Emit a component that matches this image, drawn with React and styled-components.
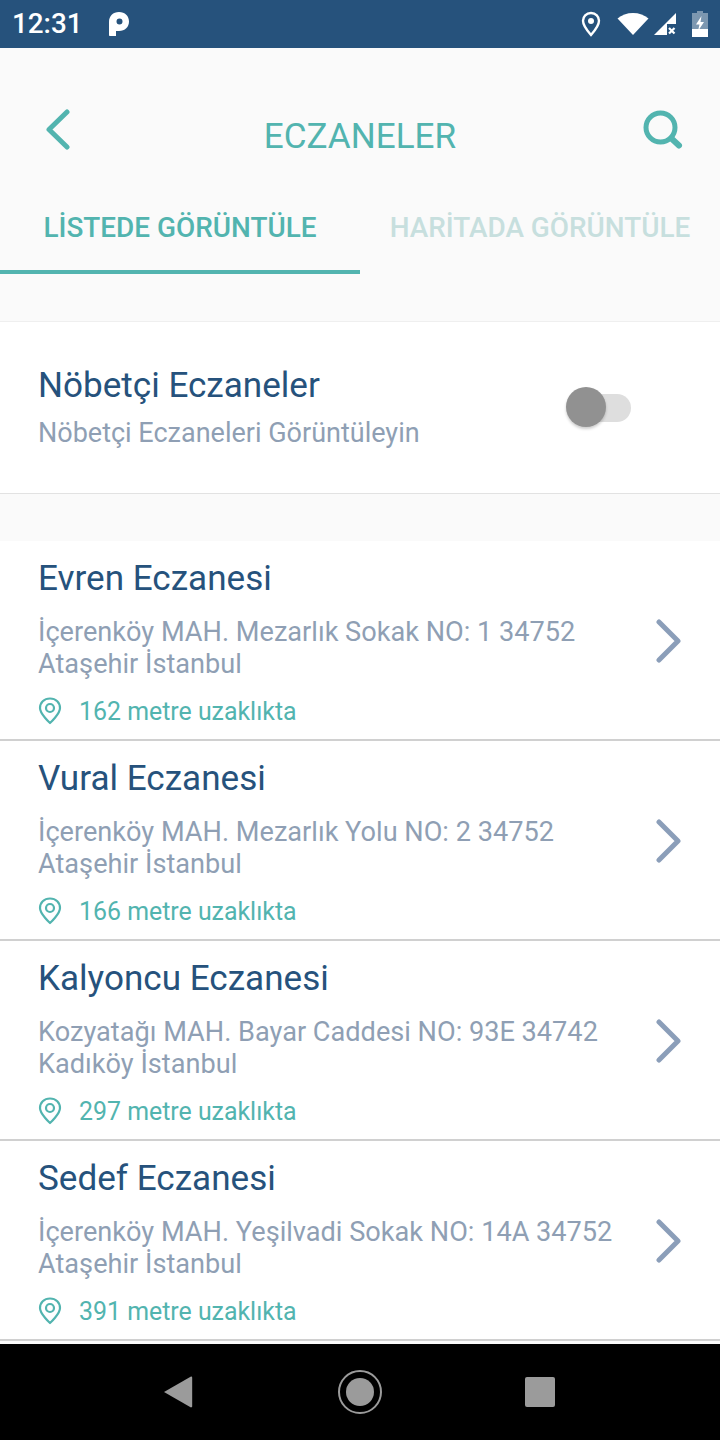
import React from "react";
import styled, { createGlobalStyle } from "styled-components";

const Global = createGlobalStyle`
  html, body { margin: 0; padding: 0; background: #fff; }
  * { box-sizing: border-box; }
  body { font-family: Roboto, "Noto Sans", sans-serif; }
`;
const Screen = styled.div`
  width: 720px; height: 1440px; display: flex; flex-direction: column; overflow: hidden; background: #fafafa;
`;
const StatusBar = styled.div`
  height: 48px; flex: none; background: #26527c; color: #fff; display: flex; align-items: center; padding: 0 12px 0 12px;
`;
const Clock = styled.span`
  font-size: 27.8px; font-weight: 500; width: 97px; line-height: 48px;
`;
const StatusIcons = styled.div`
  margin-left: auto; display: flex; align-items: center; height: 48px;
`;
const Header = styled.header`
  height: 132px; flex: none; display: flex; align-items: flex-start; justify-content: space-between; padding: 61px 36px 0;
`;
const BackSlot = styled.span`
  width: 42px; display: flex; padding-left: 8px;
`;
const Title = styled.h1`
  flex: 1; margin: 3px 0 0; text-align: center; font-size: 35.1px; line-height: 48px; font-weight: 400; color: #52b4af;
`;
const Tabs = styled.div`
  height: 94px; flex: none; display: flex;
`;
const Tab = styled.div`
  width: 360px; display: flex; align-items: center; justify-content: center; padding-top: 5px;
  font-size: 27.9px; font-weight: 500; color: ${p => p.$active ? "#52b4af" : "#c7dfde"};
  border-bottom: 4px solid ${p => p.$active ? "#52b4af" : "transparent"};
`;
const Gap = styled.div`
  height: ${p => p.$h}px; flex: none; background: #fafafa;
`;
const DutyCard = styled.section`
  height: 173px; flex: none; background: #fff; border-top: 1px solid #efefef; border-bottom: 1px solid #e2e2e2;
  display: flex; align-items: center; justify-content: space-between; padding: 0 89px 0 38px;
`;
const Name = styled.div`
  font-size: 35.1px; line-height: 44px; color: #26527c;
`;
const DutySub = styled.div`
  font-size: 27px; line-height: 32px; color: #8f9fb4; margin-top: 10px; margin-bottom: 3px;
`;
const Toggle = styled.div`
  width: 66px; height: 42px; position: relative; display: flex; align-items: center; justify-content: flex-end;
`;
const Track = styled.div`
  width: 60px; height: 28px; border-radius: 14px; background: #dedede;
`;
const Knob = styled.div`
  position: absolute; left: 1px; top: 0; width: 40px; height: 40px; border-radius: 50%; background: #919191;
  box-shadow: 0 2px 3px rgba(0,0,0,.2);
`;
const List = styled.div`
  flex: none; background: #fff;
`;
const Row = styled.article`
  height: 200px; display: flex; align-items: flex-start; justify-content: space-between; padding: 15px 38px 0;
  border-bottom: 2px solid #d0d0d0; background: #fff;
`;
const RowBody = styled.div`
  display: flex; flex-direction: column;
`;
const Address = styled.div`
  font-size: 27.15px; line-height: 32px; color: #8f9fb4; margin-top: 16px; width: 590px;
`;
const Distance = styled.div`
  display: flex; align-items: center; margin-top: 15px; height: 32px; font-size: 24.9px; color: #52b4af;
`;
const PinWrap = styled.span`
  display: flex; width: 41px; flex: none;
`;
const Chevron = styled.span`
  display: flex; margin-top: 63px;
`;
const NavBar = styled.nav`
  height: 96px; margin-top: 3px; flex: none; background: #000; display: flex; align-items: center; justify-content: center;
`;
const NavSlot = styled.span`
  width: 180px; display: flex; justify-content: center;
`;
const NavBack = styled.svg`
  margin-right: 4px;
`;

const LocationIcon = () => (
  <svg width="24" height="26" viewBox="0 0 24 26" style={{ marginRight: 14 }}>
    <path d="M12 2C7.200 2 4 5.500 4 9.800 4 15 12 24 12 24s8-9 8-14.200C20 5.500 16.800 2 12 2z" fill="none" stroke="#fff" strokeWidth="2.400" />
    <circle cx="12" cy="10" r="3" fill="#fff" />
  </svg>
);
const WifiIcon = () => (
  <svg width="32" height="24" viewBox="0 0 32 24" style={{ marginRight: 4 }}>
    <path d="M0.500 6.500C4.500 3 10 1 16 1s11.500 2 15.500 5.500L16 23z" fill="#fff" />
  </svg>
);
const SignalIcon = () => (
  <svg width="24" height="24" viewBox="0 0 24 24" style={{ marginRight: 15 }}>
    <path d="M23 1v11h-9v11H1z" fill="#fff" />
    <path d="M16 16l5.500 5.500m0-5.500L16 21.500" stroke="#fff" strokeWidth="2.200" />
  </svg>
);
const BatteryIcon = () => (
  <svg width="16" height="26" viewBox="0 0 16 26">
    <path d="M5 0h6v2h5v24H0V2h5z" fill="#fff" opacity=".4" />
    <path d="M0 18h16v8H0z" fill="#fff" />
    <path d="M9.500 5L4 13.500h3.500L6 20l6-9H8.500z" fill="#fff" />
  </svg>
);
const BackIcon = () => (
  <svg width="26" height="42" viewBox="0 0 26 42">
    <path d="M23 3L5 20.500 23 38" fill="none" stroke="#52b4af" strokeWidth="5" strokeLinecap="round" strokeLinejoin="round" />
  </svg>
);
const SearchIcon = () => (
  <svg width="42" height="42" viewBox="0 0 42 42">
    <circle cx="18.500" cy="18.500" r="14.500" fill="none" stroke="#52b4af" strokeWidth="5" />
    <path d="M30 30L37 36.500" stroke="#52b4af" strokeWidth="6" strokeLinecap="round" />
  </svg>
);
const PinIcon = () => (
  <svg width="24" height="28" viewBox="0 0 24 28">
    <path d="M12 1.500C6 1.500 2 5.800 2 11c0 6 10 15 10 15s10-9 10-15c0-5.200-4-9.500-10-9.500z" fill="none" stroke="#52b4af" strokeWidth="2.200" strokeLinejoin="round" />
    <circle cx="12" cy="11" r="4" fill="none" stroke="#52b4af" strokeWidth="2.200" />
  </svg>
);
const NextIcon = () => (
  <svg width="28" height="44" viewBox="0 0 28 44">
    <path d="M5 3l19 19L5 41" fill="none" stroke="#8b9eb9" strokeWidth="5" strokeLinecap="round" strokeLinejoin="round" />
  </svg>
);
const ParkingIcon = () => (
  <svg width="20" height="24" viewBox="0 0 20 24">
    <path fillRule="evenodd" d="M0 10C0 4 4 0 10 0s10 4 10 9.500-4 9.500-10 9.500H7v5H1c-.5 0-1-.4-1-1zM10.500 6.500a3 3 0 100 6 3 3 0 000-6z" fill="#fff" />
  </svg>
);

const pharmacies = [
  { name: "Evren Eczanesi", l1: "İçerenköy MAH. Mezarlık Sokak NO: 1 34752", l2: "Ataşehir İstanbul", d: 162 },
  { name: "Vural Eczanesi", l1: "İçerenköy MAH. Mezarlık Yolu NO: 2 34752", l2: "Ataşehir İstanbul", d: 166 },
  { name: "Kalyoncu Eczanesi", l1: "Kozyatağı MAH. Bayar Caddesi NO: 93E 34742", l2: "Kadıköy İstanbul", d: 297 },
  { name: "Sedef Eczanesi", l1: "İçerenköy MAH. Yeşilvadi Sokak NO: 14A 34752", l2: "Ataşehir İstanbul", d: 391 },
];

export default function App() {
  return (
    <Screen>
      <Global />
      <StatusBar>
        <Clock>12:31</Clock>
        <ParkingIcon />
        <StatusIcons>
          <LocationIcon />
          <WifiIcon />
          <SignalIcon />
          <BatteryIcon />
        </StatusIcons>
      </StatusBar>
      <Header>
        <BackSlot><BackIcon /></BackSlot>
        <Title>ECZANELER</Title>
        <SearchIcon />
      </Header>
      <Tabs>
        <Tab $active>LİSTEDE GÖRÜNTÜLE</Tab>
        <Tab>HARİTADA GÖRÜNTÜLE</Tab>
      </Tabs>
      <Gap $h={47} />
      <DutyCard>
        <div>
          <Name>Nöbetçi Eczaneler</Name>
          <DutySub>Nöbetçi Eczaneleri Görüntüleyin</DutySub>
        </div>
        <Toggle><Track /><Knob /></Toggle>
      </DutyCard>
      <Gap $h={47} />
      <List>
        {pharmacies.map(p => (
          <Row key={p.name}>
            <RowBody>
              <Name>{p.name}</Name>
              <Address>{p.l1}<br />{p.l2}</Address>
              <Distance><PinWrap><PinIcon /></PinWrap>{p.d} metre uzaklıkta</Distance>
            </RowBody>
            <Chevron><NextIcon /></Chevron>
          </Row>
        ))}
      </List>
      <NavBar>
        <NavSlot>
          <NavBack width="30" height="34" viewBox="0 0 30 34"><path d="M28 1.500c.8 0 1.200.5 1.200 1.200v28.600c0 .7-.4 1.200-1.200 1.200L1 17z" fill="#9b9b9b" /></NavBack>
        </NavSlot>
        <NavSlot>
          <svg width="46" height="46" viewBox="0 0 46 46"><circle cx="23" cy="23" r="21" fill="none" stroke="#9b9b9b" strokeWidth="2" /><circle cx="23" cy="23" r="14" fill="#9b9b9b" /></svg>
        </NavSlot>
        <NavSlot>
          <svg width="30" height="30" viewBox="0 0 30 30"><rect width="30" height="30" rx="2" fill="#9b9b9b" /></svg>
        </NavSlot>
      </NavBar>
    </Screen>
  );
}
